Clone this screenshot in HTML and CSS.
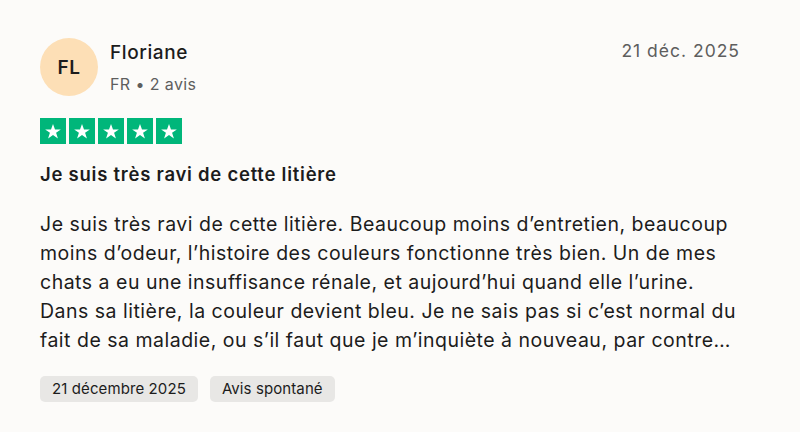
FILE: index.html
```html
<!DOCTYPE html>
<html lang="fr">
<head>
<meta charset="utf-8">
<link rel="stylesheet" href="styles.css">
</head>
<body>
<article class="review">
  <header class="head">
    <div class="user">
      <div class="avatar">FL</div>
      <div class="info">
        <div class="name">Floriane</div>
        <div class="meta">FR • 2 avis</div>
      </div>
    </div>
    <time class="date">21 déc. 2025</time>
  </header>
  <div class="stars">
    <span class="star"><svg viewBox="0 0 24 24"><path d="M12 3.5l2.4 6.6h7l-5.7 4.1 2.2 6.7L12 16.8l-5.9 4.1 2.2-6.7-5.7-4.1h7z" fill="#fff"/></svg></span>
    <span class="star"><svg viewBox="0 0 24 24"><path d="M12 3.5l2.4 6.6h7l-5.7 4.1 2.2 6.7L12 16.8l-5.9 4.1 2.2-6.7-5.7-4.1h7z" fill="#fff"/></svg></span>
    <span class="star"><svg viewBox="0 0 24 24"><path d="M12 3.5l2.4 6.6h7l-5.7 4.1 2.2 6.7L12 16.8l-5.9 4.1 2.2-6.7-5.7-4.1h7z" fill="#fff"/></svg></span>
    <span class="star"><svg viewBox="0 0 24 24"><path d="M12 3.5l2.4 6.6h7l-5.7 4.1 2.2 6.7L12 16.8l-5.9 4.1 2.2-6.7-5.7-4.1h7z" fill="#fff"/></svg></span>
    <span class="star"><svg viewBox="0 0 24 24"><path d="M12 3.5l2.4 6.6h7l-5.7 4.1 2.2 6.7L12 16.8l-5.9 4.1 2.2-6.7-5.7-4.1h7z" fill="#fff"/></svg></span>
  </div>
  <h2 class="title">Je suis très ravi de cette litière</h2>
  <p class="body">Je suis très ravi de cette litière. Beaucoup moins d’entretien, beaucoup moins d’odeur, l’histoire des couleurs fonctionne très bien. Un de mes chats a eu une insuffisance rénale, et aujourd’hui quand elle l’urine. Dans sa litière, la couleur devient bleu. Je ne sais pas si c’est normal du fait de sa maladie, ou s’il faut que je m’inquiète à nouveau, par contre…</p>
  <div class="tags">
    <span class="tag">21 décembre 2025</span>
    <span class="tag">Avis spontané</span>
  </div>
</article>
</body>
</html>
```
FILE: styles.css
```css
* { box-sizing: border-box; }
html, body { margin: 0; padding: 0; }
body {
  background: #fcfbf9;
  font-family: Inter, "Noto Sans", sans-serif;
  color: #1c1c1c;
  width: 800px;
  height: 432px;
  overflow: hidden;
}
.review {
  padding: 38px 60px 0 40px;
}
.head {
  display: flex;
  justify-content: space-between;
  align-items: flex-start;
}
.user {
  display: flex;
  align-items: center;
  gap: 12px;
}
.avatar {
  width: 58px;
  height: 58px;
  border-radius: 50%;
  background: #fddfb6;
  display: flex;
  align-items: center;
  justify-content: center;
  font-size: 19px;
  font-weight: 600;
  letter-spacing: 0.5px;
  color: #1c1c1c;
}
.name {
  font-size: 19px;
  font-weight: 500;
  letter-spacing: 0.6px;
  line-height: 26px;
  margin-top: 1px;
}
.meta {
  font-size: 16px;
  color: #5e5e5e;
  letter-spacing: 0.4px;
  line-height: 22px;
  margin-top: 7px;
}
.date {
  font-size: 17.5px;
  letter-spacing: 1px;
  color: #5e5e5e;
  line-height: 24px;
  margin-top: 1px;
}
.stars {
  display: flex;
  gap: 3px;
  margin-top: 22px;
}
.star {
  width: 26px;
  height: 26px;
  background: #00b67a;
  display: flex;
  align-items: center;
  justify-content: center;
}
.star svg { width: 20px; height: 20px; }
.title {
  font-size: 18.5px;
  font-weight: 600;
  letter-spacing: 0.75px;
  margin: 17px 0 0;
  line-height: 26px;
}
.body {
  font-size: 19.5px;
  letter-spacing: 0.5px;
  line-height: 29px;
  margin: 23px -8px 0 0;
  color: #1c1c1c;
}
.tags {
  display: flex;
  gap: 12px;
  margin-top: 21px;
}
.tag {
  background: #e8e7e5;
  border-radius: 5px;
  padding: 0 12px;
  height: 26px;
  line-height: 26px;
  font-size: 15px;
  letter-spacing: 0.1px;
  color: #1c1c1c;
}
```
